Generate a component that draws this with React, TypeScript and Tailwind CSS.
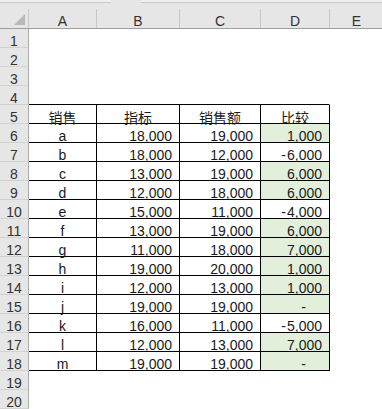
import React from "react";

const cols = ["A", "B", "C", "D", "E"];

type Row = { name: string; target: string; sales: string; diff: string; neg: boolean; zero: boolean };

const data: Row[] = [
  { name: "a", target: "18,000", sales: "19,000", diff: "1,000", neg: false, zero: false },
  { name: "b", target: "18,000", sales: "12,000", diff: "6,000", neg: true, zero: false },
  { name: "c", target: "13,000", sales: "19,000", diff: "6,000", neg: false, zero: false },
  { name: "d", target: "12,000", sales: "18,000", diff: "6,000", neg: false, zero: false },
  { name: "e", target: "15,000", sales: "11,000", diff: "4,000", neg: true, zero: false },
  { name: "f", target: "13,000", sales: "19,000", diff: "6,000", neg: false, zero: false },
  { name: "g", target: "11,000", sales: "18,000", diff: "7,000", neg: false, zero: false },
  { name: "h", target: "19,000", sales: "20,000", diff: "1,000", neg: false, zero: false },
  { name: "i", target: "12,000", sales: "13,000", diff: "1,000", neg: false, zero: false },
  { name: "j", target: "19,000", sales: "19,000", diff: "-", neg: false, zero: true },
  { name: "k", target: "16,000", sales: "11,000", diff: "5,000", neg: true, zero: false },
  { name: "l", target: "12,000", sales: "13,000", diff: "7,000", neg: false, zero: false },
  { name: "m", target: "19,000", sales: "19,000", diff: "-", neg: false, zero: true },
];

const GRID = "grid grid-cols-[29px_68px_83px_81px_69px_53px]";
const TXT = "h-[19px] pt-[5px] leading-[14px] whitespace-nowrap overflow-visible";

function RowHeader({ n }: { n: number }) {
  return (
    <div className={`${TXT} bg-[#e6e6e6] border-r border-b border-r-[#ababab] border-b-[#d2d2d2] text-center text-[#333]`}>
      {n}
    </div>
  );
}

export default function App() {
  const rows: React.ReactNode[] = [];
  for (let r = 1; r <= 20; r++) {
    let cells: React.ReactNode;
    if (r <= 4) {
      const bb = r === 4 ? "border-b border-black" : "";
      cells = (
        <>
          <div className={`${TXT} ${bb}`} />
          <div className={`${TXT} ${bb}`} />
          <div className={`${TXT} ${bb}`} />
          <div className={`${TXT} ${bb} border-r border-r-transparent`} />
          <div className={TXT} />
        </>
      );
    } else if (r === 5) {
      const c = `${TXT} border-r border-b border-black text-center font-['Noto_Sans_CJK_SC',sans-serif] leading-[14px] pt-[3px]`;
      cells = (
        <>
          <div className={c}>销售</div>
          <div className={c}>指标</div>
          <div className={c}>销售额</div>
          <div className={c}>比较</div>
          <div className={TXT} />
        </>
      );
    } else if (r <= 18) {
      const d = data[r - 6];
      const base = `${TXT} border-r border-b border-black`;
      cells = (
        <>
          <div className={`${base} text-center`}>{d.name}</div>
          <div className={`${base} text-right pr-[7px]`}>{d.target}</div>
          <div className={`${base} text-right pr-[7px]`}>{d.sales}</div>
          <div className={`${base} text-right ${d.zero ? "pr-[23px]" : "pr-[7px]"} ${d.neg ? "bg-white" : "bg-[#e2efda]"}`}>
            {d.neg && <span className="mr-[1px]">-</span>}
            {d.diff}
          </div>
          <div className={TXT} />
        </>
      );
    } else {
      cells = (
        <>
          <div className={TXT} />
          <div className={TXT} />
          <div className={TXT} />
          <div className={TXT} />
          <div className={TXT} />
        </>
      );
    }
    rows.push(
      <div key={r} className={GRID}>
        <RowHeader n={r} />
        {cells}
      </div>
    );
  }

  return (
    <div className="w-[382px] h-[409px] overflow-hidden bg-white text-[14px] text-[#1a1a1a] font-['Liberation_Sans',Arial,sans-serif]">
      <div className="h-[9px] bg-[#e6e6e6] flex flex-col">
        <div className="h-[3px] flex">
          <div className="w-[111px] bg-[#f0f0f0] border-b border-[#c8c8c8]" />
          <div className="w-[30px] bg-[#e6e6e6]" />
          <div className="flex-1 bg-[#f0f0f0] border-b border-[#c8c8c8]" />
        </div>
      </div>
      <div className={`${GRID} h-[20px] bg-[#e6e6e6] border-b border-[#9e9e9e]`}>
        <div className="relative border-r border-[#c8c8c8]">
          <div className="absolute right-[3px] bottom-[3px] w-0 h-0 border-l-[11px] border-l-transparent border-b-[11px] border-b-[#b9b9b9]" />
        </div>
        {cols.map((c, i) => (
          <div
            key={c}
            className={`text-center text-[#333] leading-[14px] pt-[5px] ${i < 4 ? "border-r border-[#c8c8c8]" : ""}`}
          >
            {c}
          </div>
        ))}
      </div>
      {rows}
    </div>
  );
}
